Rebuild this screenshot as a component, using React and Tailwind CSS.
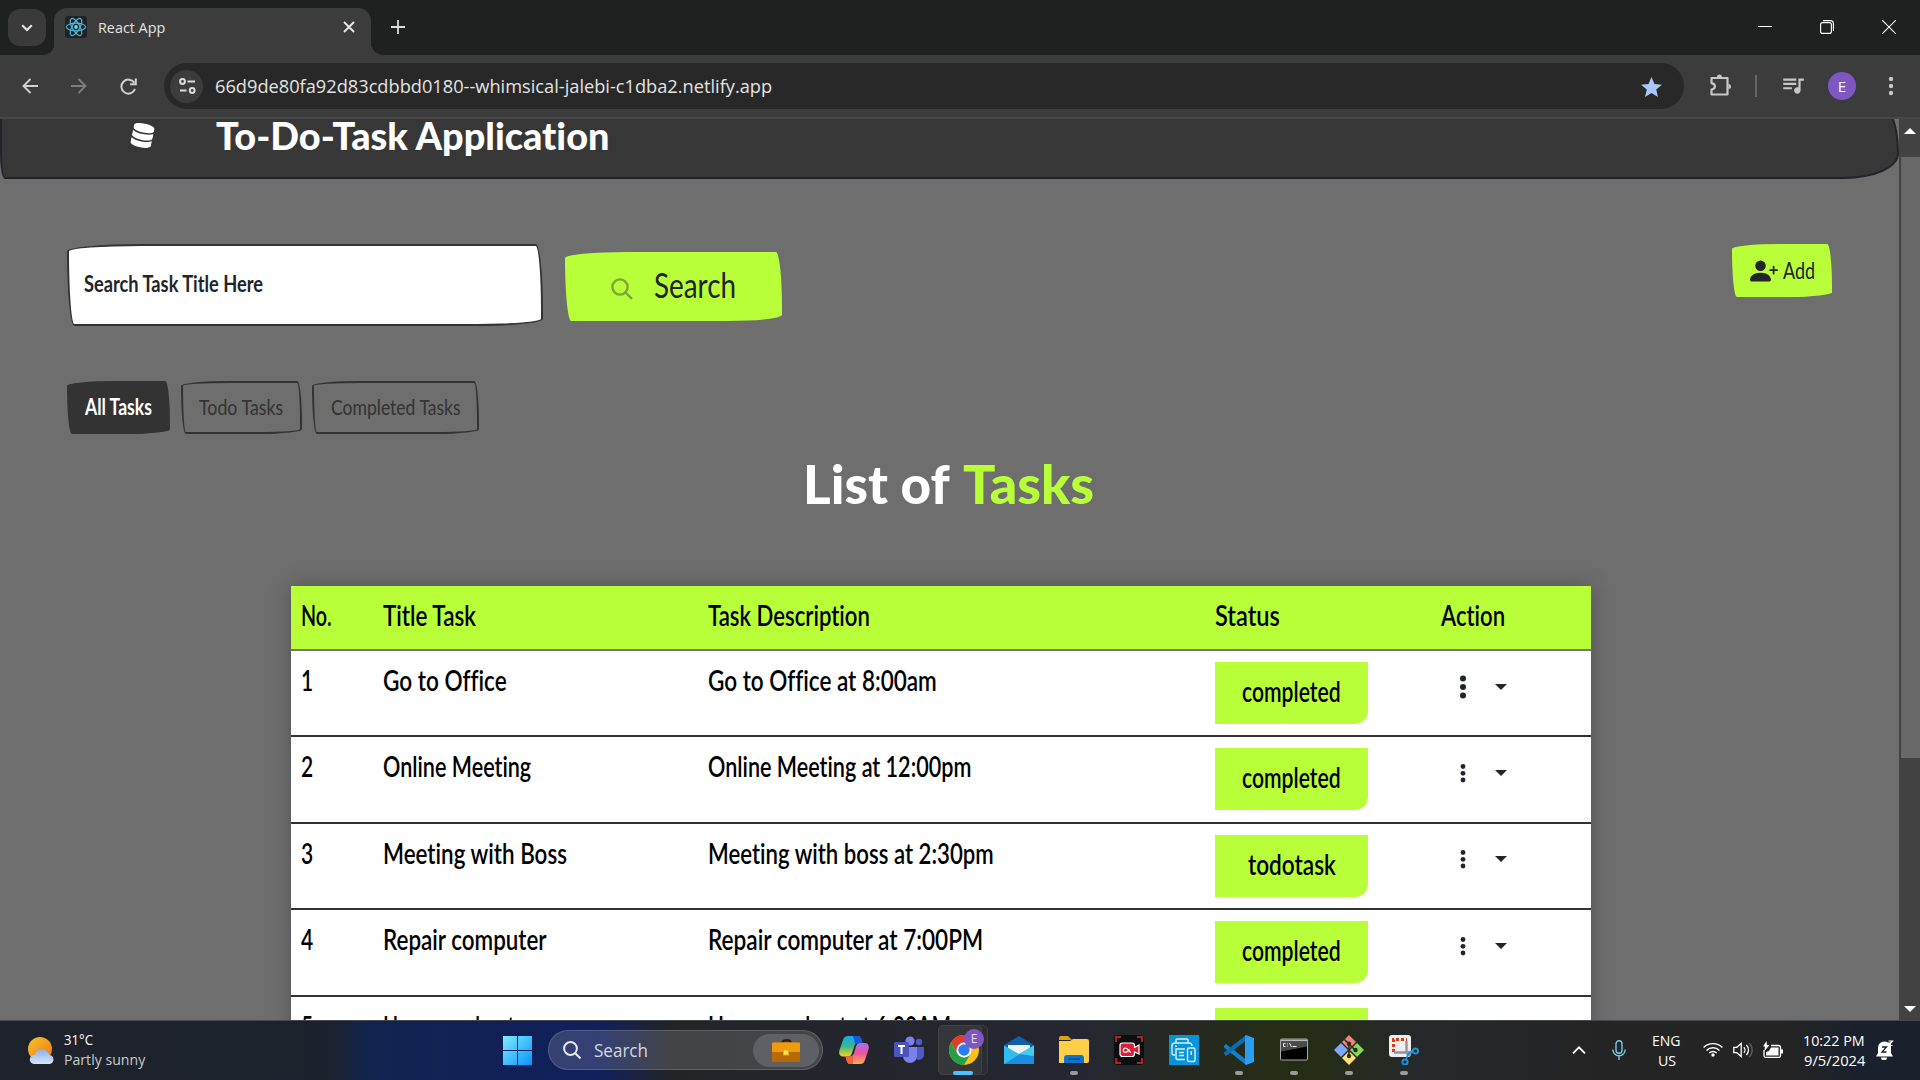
import React, { useLayoutEffect, useRef } from "react";
import { FaDatabase } from "react-icons/fa";
import { BsPersonPlusFill } from "react-icons/bs";
import { MdQueueMusic, MdStar } from "react-icons/md";

// Condenses or widens a run of text so that it fills its box.
function Fit({ className = "", children }) {
  const outer = useRef(null);
  const inner = useRef(null);
  useLayoutEffect(() => {
    const w = inner.current.offsetWidth;
    if (w) inner.current.style.transform = `scaleX(${outer.current.offsetWidth / w})`;
  }, []);
  return (
    <span ref={outer} className={`inline-block shrink-0 whitespace-nowrap ${className}`}>
      <span ref={inner} className="inline-block origin-left">{children}</span>
    </span>
  );
}

const HAND = "font-['Lato','Noto_Sans',sans-serif] [font-variant-ligatures:none]";
const SKETCH = "rounded-[255px_25px_225px_25px/25px_225px_25px_255px]";

function Favicon() {
  return (
    <svg viewBox="0 0 22 22" className="h-[22px] w-[22px]">
      <rect width="22" height="22" rx="3" fill="#1f2225" />
      <circle cx="11" cy="11" r="1.9" fill="#61dafb" />
      <g fill="none" stroke="#4fb9d8" strokeWidth="1.2">
        <ellipse cx="11" cy="11" rx="9.6" ry="3.8" />
        <ellipse cx="11" cy="11" rx="9.6" ry="3.8" transform="rotate(60 11 11)" />
        <ellipse cx="11" cy="11" rx="9.6" ry="3.8" transform="rotate(120 11 11)" />
      </g>
    </svg>
  );
}

function TabStrip() {
  return (
    <div className="flex h-[55px] items-start bg-[#1f2120]">
      <div className="ml-2 mt-[9px] flex h-[37px] w-[38px] items-center justify-center rounded-[12px] bg-[#3a3a3a]">
        <svg viewBox="0 0 12 8" className="h-2 w-3" fill="none" stroke="#e3e3e3" strokeWidth="2.2"><path d="M1.2 1.2 6 6l4.8-4.8" /></svg>
      </div>
      <svg viewBox="0 0 13 13" className="-mr-px ml-[-4px] mt-[42px] h-[13px] w-[13px]"><path d="M13 0v13H0C8 13 12 8 13 0Z" fill="#3c3c3c" /></svg>
      <div className="mt-2 flex h-[47px] w-[317px] items-center rounded-t-[13px] bg-[#3c3c3c] pb-[9px] pl-[11px]">
        <Favicon />
        <Fit className="ml-[11px] w-[67px] text-[15px] leading-5 text-[#e3e3e3]">React App</Fit>
        <svg viewBox="0 0 12 12" className="ml-[178px] h-3 w-3" fill="none" stroke="#e8e8e8" strokeWidth="1.9"><path d="m1 1 10 10M11 1 1 11" /></svg>
      </div>
      <svg viewBox="0 0 14 14" className="-ml-px mt-[41px] h-[14px] w-[14px]"><path d="M0 0v14h14C6 14 1 8 0 0Z" fill="#3c3c3c" /></svg>
      <svg viewBox="0 0 14 14" className="ml-[7px] mt-5 h-[14px] w-[14px]" fill="none" stroke="#dcdcdc" strokeWidth="1.8"><path d="M7 0v14M0 7h14" /></svg>
      <div className="mr-[24px] ml-auto flex h-[54px] items-center gap-[48px]">
        <svg viewBox="0 0 14 14" className="h-[14px] w-[14px]" stroke="#fff" strokeWidth="1"><path d="M0 6.5h14" /></svg>
        <svg viewBox="0 0 14 14" className="h-[14px] w-[14px]" fill="none" stroke="#fff" strokeWidth="1.1"><rect x=".6" y="2.6" width="10.8" height="10.8" rx="2" /><path d="M3 .6h7.4a3 3 0 0 1 3 3V11" /></svg>
        <svg viewBox="0 0 14 14" className="h-[14px] w-[14px]" stroke="#fff" strokeWidth="1.1"><path d="m0 0 14 14M14 0 0 14" /></svg>
      </div>
    </div>
  );
}

function Toolbar() {
  return (
    <div className="flex h-[62px] items-center bg-[#3c3c3c] text-[#c7c7c7]">
      <svg viewBox="0 0 16 16" className="ml-[22px] h-4 w-4" fill="none" stroke="#d0d0d0" strokeWidth="1.9"><path d="M16 8H1.5M8.5 1l-7 7 7 7" /></svg>
      <svg viewBox="0 0 16 16" className="ml-[33px] h-4 w-4" fill="none" stroke="#7d7d7d" strokeWidth="1.9"><path d="M0 8h14.500M7.500 1l7 7-7 7" /></svg>
      <svg viewBox="0 0 17 17" className="ml-[33px] h-[17px] w-[17px]" fill="none" stroke="#d0d0d0" strokeWidth="2"><path d="M15 11A7 7 0 1 1 14.300 4.800M15.800.5v5.700h-5.700" /></svg>
      <div className="ml-[27px] flex h-[46px] w-[1520px] items-center rounded-full bg-[#282828] pl-[6px] pr-[20px]">
        <div className="flex h-[33px] w-[33px] items-center justify-center rounded-full bg-[#3c3c3c]">
          <svg viewBox="0 0 17 16" className="ml-px h-4 w-[17px]" fill="none" stroke="#dcdcdc" strokeWidth="2"><circle cx="3.500" cy="3.500" r="2.400" /><path d="M8.500 3.500H16M1 12.500h6.500" /><circle cx="13.200" cy="12.500" r="2.400" /></svg>
        </div>
        <Fit className="ml-[12px] w-[557px] text-[19px] leading-6 text-[#e3e3e3]">66d9de80fa92d83cdbbd0180--whimsical-jalebi-c1dba2.netlify.app</Fit>
        <MdStar className="ml-auto mt-[2px] h-[25px] w-[25px] text-[#a8c7fa]" />
      </div>
      <svg viewBox="0 0 24 24" className="-mt-[2px] ml-[24px] h-[24px] w-[24px]" fill="none" stroke="#c7c7c7" strokeWidth="2.200"><path d="M3.500 5h16v16.500h-16v-5c4.500-.6 4.500-5.800 0-6.400Z" strokeLinejoin="round" /><path d="M9 4a2.500 2.500 0 0 1 5 0ZM20.500 11a2.500 2.500 0 0 1 0 5Z" fill="#c7c7c7" stroke="none" /></svg>
      <div className="ml-[23px] h-[22px] w-[2px] bg-[#666]" />
      <MdQueueMusic className="-mt-[2px] ml-[23px] h-[26px] w-[26px]" />
      <div className="ml-[22px] flex h-7 w-7 items-center justify-center rounded-full bg-[#7e57c2] text-[15px] text-white">E</div>
      <svg viewBox="0 0 4 20" className="ml-[33px] h-5 w-1 overflow-visible" fill="#c7c7c7"><circle cx="2" cy="3" r="2.200" /><circle cx="2" cy="10" r="2.200" /><circle cx="2" cy="17" r="2.200" /></svg>
    </div>
  );
}

const TASKS = [
  ["1", "Go to Office", "w-[124px]", "Go to Office at 8:00am", "w-[229px]", "completed", "w-[99px]"],
  ["2", "Online Meeting", "w-[148px]", "Online Meeting at 12:00pm", "w-[263px]", "completed", "w-[99px]"],
  ["3", "Meeting with Boss", "w-[184px]", "Meeting with boss at 2:30pm", "w-[286px]", "todotask", "w-[88px]"],
  ["4", "Repair computer", "w-[164px]", "Repair computer at 7:00PM", "w-[275px]", "completed", "w-[99px]"],
  ["5", "Home workout", "w-[132px]", "Home workout at 6:00AM", "w-[243px]", "completed", "w-[99px]"],
];

function TaskTable() {
  const cols = "grid grid-cols-[82px_325px_507px_226px_160px]";
  return (
    <div className="ml-[291px] w-[1300px] bg-white text-[28px] font-semibold leading-[58px] text-black shadow-[0_0_20px_rgba(0,0,0,0.25)]">
      <div className={`${cols} h-[65px] border-b-2 border-[#777] bg-[#b9ff39] pl-[10px]`}>
        <Fit className="w-[31px]">No.</Fit>
        <Fit className="w-[93px]">Title Task</Fit>
        <Fit className="w-[162px]">Task Description</Fit>
        <Fit className="w-[65px]">Status</Fit>
        <Fit className="w-[64px]">Action</Fit>
      </div>
      {TASKS.map(([no, title, tw, desc, dw, status, sw], i) => (
        <div key={no} className={`${cols} h-[86.4px] border-b-2 border-[#333] pl-[10px]`}>
          <Fit className="w-[12px]">{no}</Fit>
          <Fit className={tw}>{title}</Fit>
          <Fit className={dw}>{desc}</Fit>
          <div className="mt-[11px] flex h-[62px] w-[153px] justify-center rounded-br-[13px] bg-[#b9ff39] leading-[58px]">
            <Fit className={sw}>{status}</Fit>
          </div>
          <div className="flex h-[71px] items-center gap-6 pl-[14px]">
            <svg viewBox="0 0 16 24" className="h-6 w-4" fill="#212529">
              {(i === 0 ? [3.500, 12, 20.500] : [5.500, 12.300, 19]).map((y) => (
                <circle key={y} cx="8" cy={y} r={i === 0 ? 3 : 2.400} />
              ))}
            </svg>
            <svg viewBox="0 0 12 6" className="h-[6px] w-3" fill="#212529"><path d="M0 0h12L6 6Z" /></svg>
          </div>
        </div>
      ))}
    </div>
  );
}

function Page() {
  return (
    <div className={`h-[901px] w-[1899px] overflow-hidden bg-[#6e6e6e] ${HAND}`}>
      <header className="-mt-[22px] flex h-[82px] items-center rounded-[25px_25px_55px_5px/5px_55px_25px_25px] border-2 border-[#212529] bg-[#373737] text-white">
        <FaDatabase className="ml-[130px] mt-[-5px] h-[25px] w-[21px] rotate-[12deg]" />
        <Fit className="-mt-[6px] ml-[63px] w-[393px] text-[38px] font-black leading-[46px]">To-Do-Task Application</Fit>
      </header>
      <div className="flex items-start pl-[67px] pt-[65px]">
        <div className={`h-[82px] w-[476px] border-2 border-[#333] bg-white pl-[15px] text-[22px] font-bold leading-[76px] text-[#212529] ${SKETCH}`}>
          <Fit className="w-[179px]">Search Task Title Here</Fit>
        </div>
        <div className={`ml-[22px] mt-2 flex h-[69px] w-[217px] items-center bg-[#b9ff39] pl-[46px] text-[#212529] ${SKETCH}`}>
          <svg viewBox="0 0 22 22" className="mt-[4px] h-[22px] w-[22px]" fill="none" stroke="#7ea536" strokeWidth="2.400"><circle cx="9" cy="9" r="7.600" /><path d="m14.500 14.500 6.500 6.500" /></svg>
          <Fit className="-mt-[4px] ml-[21px] w-[82px] text-[34px] leading-[66px]">Search</Fit>
        </div>
        <div className={`ml-[950px] flex h-[53px] w-[100px] items-center bg-[#b9ff39] pl-[18px] text-[#212529] ${SKETCH}`}>
          <BsPersonPlusFill className="h-[28px] w-[28px]" />
          <Fit className="-mt-px ml-[5px] w-[32px] text-[23px] leading-[53px]">Add</Fit>
        </div>
      </div>
      <div className="mt-[55px] flex pl-[67px] text-[22px] leading-[47px] text-[#333]">
        <div className={`flex h-[53px] w-[103px] border-2 border-[#333] bg-[#333] pl-[16px] font-bold text-white ${SKETCH}`}><Fit className="w-[67px]">All Tasks</Fit></div>
        <div className={`ml-[11px] flex h-[53px] w-[121px] border-2 border-[#333] pl-[16px] ${SKETCH}`}><Fit className="w-[84px]">Todo Tasks</Fit></div>
        <div className={`ml-[10px] flex h-[53px] w-[167px] border-2 border-[#333] pl-[17px] ${SKETCH}`}><Fit className="w-[130px]">Completed Tasks</Fit></div>
      </div>
      <h1 className="mt-[20px] flex h-[132px] pl-[803px] text-[53px] font-black leading-[60px] text-white">
        <Fit className="w-[147px]">List of</Fit>
        <Fit className="ml-[13px] w-[131px] text-[#b9ff39]">Tasks</Fit>
      </h1>
      <TaskTable />
    </div>
  );
}

function Scrollbar() {
  return (
    <div className="flex h-[901px] w-[21px] flex-col items-center bg-[#424242]">
      <svg viewBox="0 0 12 6" className="mt-[9px] h-[6px] w-3" fill="#fff"><path d="M0 6h12L6 0Z" /></svg>
      <div className="ml-[2px] mt-[23px] h-[601px] w-[19px] bg-[#686868]" />
      <svg viewBox="0 0 12 6" className="mb-[8px] mt-auto h-[6px] w-3" fill="#fff"><path d="M0 0h12L6 6Z" /></svg>
    </div>
  );
}

function Copilot() {
  return (
    <svg viewBox="0 0 30 28" className="h-7 w-[30px]">
      <defs>
        <linearGradient id="cpA" x1="0" y1="0" x2="0" y2="1"><stop offset="0" stopColor="#1aa5f5" /><stop offset=".5" stopColor="#35b98a" /><stop offset="1" stopColor="#f5d21c" /></linearGradient>
        <linearGradient id="cpB" x1="0" y1="0" x2="0" y2="1"><stop offset="0" stopColor="#a66bf2" /><stop offset=".5" stopColor="#f0559b" /><stop offset="1" stopColor="#ffae4a" /></linearGradient>
      </defs>
      <path d="M9 0h10c2 0 3 2 3.500 4l1 3h-4c-2.500 0-3.500 1-4.200 3.500L13 17c-.8 2.600-2 3.500-4 3.500H4C.5 20.500-.5 17 .5 14L4 4c1-3 2.500-4 5-4Z" fill="url(#cpA)" />
      <path d="M14 0h5c2 0 3 2 3.500 4l1 3h-4c-1.500 0-2.500.5-3.200 1.400Z" fill="#1558d6" />
      <path d="M21 28H11c-2 0-3-2-3.500-4l-1-3.500H11c2.200 0 3.200-1.200 4-3.500l2-6.500C17.800 8 19 7 21 7h5c3.500 0 4.500 3.500 3.500 6.500L26 24c-1 3-2.500 4-5 4Z" fill="url(#cpB)" />
      <path d="M14 28h-3c-2 0-3-2-3.500-4l-1-3.500H11c1.500 0 2.400-.4 3.100-1.300Z" fill="#f4623a" />
    </svg>
  );
}

function Teams() {
  return (
    <svg viewBox="0 0 30 28" className="h-7 w-[30px]">
      <circle cx="25" cy="6" r="3.200" fill="#5059c9" /><circle cx="16" cy="5" r="4.600" fill="#7b83eb" />
      <path d="M20 11h10v8a5 5 0 0 1-7 4.500Z" fill="#5059c9" />
      <path d="M9 11h14v9a7 7 0 0 1-14 0Z" fill="#7b83eb" />
      <rect y="6" width="15" height="15" rx="1.500" fill="#4b53bc" />
      <path d="M4 10h7M7.500 10v8" stroke="#fff" strokeWidth="2" />
    </svg>
  );
}

function Chrome() {
  return (
    <svg viewBox="0 0 30 30" className="h-[30px] w-[30px]">
      <circle cx="15" cy="15" r="15" fill="#fbc116" />
      <path d="M2 7.500A15 15 0 0 1 28 7.500L15 8.500 8.700 18.500Z" fill="#e33b2e" />
      <path d="M2 7.500A15 15 0 0 0 15 30l6.200-10.700L15 22.500l-6.400-4Z" fill="#24a148" />
      <circle cx="15" cy="15" r="7.500" fill="#fff" /><circle cx="15" cy="15" r="5.700" fill="#2f7cf0" />
    </svg>
  );
}

function Mail() {
  return (
    <svg viewBox="0 0 30 28" className="h-7 w-[30px]">
      <path d="M0 9 15 0l15 9v3H0Z" fill="#0f5ea8" /><path d="M4 9h22v8l-11 5L4 17Z" fill="#f2f2f2" />
      <path d="M0 9.500 15 18 30 9.500V28H0Z" fill="#32bdf0" /><path d="M0 28 30 9.500V28Z" fill="#1a8fe0" /><path d="m15 18 15-8.500V20Z" fill="#42ccf2" />
    </svg>
  );
}

function Folder() {
  return (
    <svg viewBox="0 0 30 27" className="h-[27px] w-[30px]">
      <path d="M0 2C0 .8.800 0 2 0h7l4 4h-13Z" fill="#e0a010" /><path d="M0 5h11l3-2h14a2 2 0 0 1 2 2v20a2 2 0 0 1-2 2H0Z" fill="#ffcf48" />
      <path d="M5 27v-5a3 3 0 0 1 3-3h14a3 3 0 0 1 3 3v5Z" fill="#1272d0" /><path d="M9 23h12" stroke="#0b4a94" strokeWidth="1.300" />
    </svg>
  );
}

function Recorder() {
  return (
    <svg viewBox="0 0 30 30" className="h-[30px] w-[30px]" fill="none">
      <rect width="30" height="30" rx="4" fill="#0c0d0e" />
      <path d="M2 7V2h5M23 2h5v5M28 23v5h-5M7 28H2v-5" stroke="#e02b33" strokeWidth="1.500" />
      <path d="M8.500 8H18a2.500 2.500 0 0 1 2.500 2.500v2L25 10v9l-4.500-2v2A2.500 2.500 0 0 1 18 21.500H8.500A2.500 2.500 0 0 1 6 19v-8.500A2.500 2.500 0 0 1 8.500 8Z" fill="#d91e36" stroke="#fff" strokeWidth="1.200" />
      <path d="M17 17.300c-2.400 0-3-4.300-5.500-4.300a2.100 2.100 0 0 0 0 4.300c2.500 0 3-2.800 4.500-2.800" stroke="#fff" strokeWidth="1.200" />
    </svg>
  );
}

function Printer() {
  return (
    <svg viewBox="0 0 30 30" className="h-[30px] w-[30px]" fill="none" stroke="#d7f1ff" strokeWidth="1.400">
      <rect width="30" height="30" fill="#0794d8" stroke="none" />
      <path d="M7 8V5a1 1 0 0 1 1-1h10a1 1 0 0 1 1 1v3M6 20H4.500A1.500 1.500 0 0 1 3 18.500V11a3 3 0 0 1 3-3h14a3 3 0 0 1 3 3M16 24.500H8.500A1.500 1.500 0 0 1 7 23v-9h9M10 17.500h5M10 20.500h5M6 11.200h2" />
      <rect x="18.500" y="13" width="7.500" height="13.500" rx="1.500" /><path d="M22.200 16v4" />
    </svg>
  );
}

function VsCode() {
  return (
    <svg viewBox="0 0 30 30" className="h-[30px] w-[30px]">
      <path d="m0 11 2-2 20 15.500V30L0 12.500Z" fill="#1180cc" /><path d="m0 19 2 2L22 5.500V0L0 17.500Z" fill="#0a6cb4" />
      <path d="m22 0 8 3v24l-8 3-1-1V1Z" fill="#2a9df0" />
    </svg>
  );
}

function Cmd() {
  return (
    <svg viewBox="0 0 28 22" className="h-[23px] w-[28px]">
      <rect x=".5" y=".5" width="27" height="21" rx="1" fill="#000" stroke="#a8a8a8" /><path d="M1 2h26" stroke="#b9b9b9" strokeWidth="2" />
      <path d="M1 3h26v5L1 13Z" fill="#4a4a4a" />
      <path d="M5.500 5H3.500v3h2M7.500 5v.8M7.500 7.200V8M9.500 4.500l2 4M12.500 8h4" stroke="#f0f0f0" strokeWidth="1" fill="none" />
    </svg>
  );
}

function GitIcon() {
  return (
    <svg viewBox="0 0 30 30" className="h-[30px] w-[30px]">
      <path d="m15 0 7 7-7 7-7-7Z" fill="#f5817f" /><path d="m23 8 7 7-7 7-7-7Z" fill="#86d55c" />
      <path d="m15 16 7 7-7 7-7-7Z" fill="#ffdf78" /><path d="m7 8 7 7-7 7-7-7Z" fill="#7da7f8" />
      <path d="m10.500 4.500 4.500 4.500v12M15 9l6 6" fill="none" stroke="#2a2f1a" strokeWidth="1.600" /><circle cx="15" cy="8.800" r="2.200" fill="#2a2f1a" /><circle cx="15" cy="21" r="2.200" fill="#2a2f1a" /><circle cx="21.500" cy="15" r="2.200" fill="#2a2f1a" />
    </svg>
  );
}

function Snip() {
  return (
    <svg viewBox="0 0 30 30" className="h-[30px] w-[30px]" fill="none">
      <rect width="22" height="22" rx="3" fill="#eeeeee" />
      <path d="M4.500 17V4.500H18" stroke="#d83b1e" strokeWidth="3" strokeDasharray="3 2" />
      <path d="M17.500 6v12l4 2.500M5 17.500h13l6-1" stroke="#8a98a5" strokeWidth="2.400" />
      <circle cx="26.500" cy="16" r="2.600" stroke="#1d90dd" strokeWidth="2" /><circle cx="16" cy="27" r="2.600" stroke="#1d90dd" strokeWidth="2" /><path d="m17 24.500 2.500-6M24 17l-5 1.500" stroke="#1d90dd" strokeWidth="1.800" />
    </svg>
  );
}

function TaskbarApp({ children, running, tile }) {
  return (
    <div className="relative flex h-[59px] w-[55px] items-center justify-center pb-[2px]">
      {tile && <div className="absolute left-[2px] top-[4px] h-[50px] w-[50px] rounded-[5px] border border-[#3b3d42] bg-[#2b2d32]" />}
      {tile && <div className="absolute left-[2px] top-[4px] h-[50px] w-[44px] rounded-[5px] border border-[#414347] bg-[#34363a]" />}
      <div className="relative">{children}</div>
      {tile && <div className="absolute left-[28px] top-[8px] flex h-[20px] w-[20px] items-center justify-center rounded-full bg-[#7e57c2] text-[12px] text-[#e6dcf5]">E</div>}
      {tile && <div className="absolute bottom-[5px] left-[17px] h-[4px] w-[20px] rounded-full bg-[#4cc2ff]" />}
      {running && <div className="absolute bottom-[5px] left-[23.500px] h-[4px] w-2 rounded-full bg-[#9a9c9a]" />}
    </div>
  );
}

function Taskbar() {
  return (
    <div className="flex h-[60px] items-center border-t border-[#45484d] bg-[linear-gradient(90deg,#1e222b_0px,#1c222d_330px,#11234f_370px,#111f5c_600px,#222428_670px,#242731_1080px,#25291f_1200px,#242d14_1290px,#252b1c_1350px,#26282c_1420px,#242424_1600px,#242424_1780px,#1a202c_1860px,#1a202c_1920px)] text-white">
      <svg viewBox="0 0 27 27" className="-mt-[1px] ml-[28px] h-[27px] w-[27px]">
        <defs>
          <linearGradient id="sun" x1="0" y1="0" x2="1" y2="1"><stop offset="0" stopColor="#f6c232" /><stop offset="1" stopColor="#f0760f" /></linearGradient>
          <linearGradient id="cloud" x1="0" y1="0" x2="0" y2="1"><stop offset="0" stopColor="#8fb2ec" /><stop offset="1" stopColor="#d8e5fb" /></linearGradient>
        </defs>
        <circle cx="12" cy="12" r="12" fill="url(#sun)" /><path d="M6 27a4.500 4.500 0 0 1 .5-9 8 8 0 0 1 15 0 4.600 4.600 0 0 1 .5 9Z" fill="url(#cloud)" />
      </svg>
      <div className="-mt-[4px] ml-[9px] flex w-[440px] flex-col text-[15px] leading-[20px]">
        <Fit className="w-[29px]">31°C</Fit>
        <Fit className="w-[81px] text-[#c9cbce]">Partly sunny</Fit>
      </div>
      <svg viewBox="0 0 29 29" className="-ml-px h-[29px] w-[29px]">
        <defs><linearGradient id="win" x1="0" y1="0" x2="1" y2="1"><stop offset="0" stopColor="#7cecfd" /><stop offset="1" stopColor="#0c93fb" /></linearGradient></defs>
        <path d="M0 0h14v14H0ZM15 0h14v14H15ZM0 15h14v14H0ZM15 15h14v14H15Z" fill="url(#win)" />
      </svg>
      <div className="-mt-px ml-4 flex h-[40px] w-[275px] items-center rounded-full border border-white/15 bg-white/15 pl-[14px] pr-[3px]">
        <svg viewBox="0 0 18 18" className="h-[18px] w-[18px]" fill="none" stroke="#e6e8f0" strokeWidth="2"><circle cx="7.500" cy="7.500" r="6.400" /><path d="m12.200 12.200 5.300 5.300" /></svg>
        <Fit className="ml-[13px] w-[54px] text-[18px] leading-6 text-[#d5d7df]">Search</Fit>
        <div className="ml-auto flex h-[33px] w-[66px] items-center justify-center rounded-full bg-white/15">
          <svg viewBox="0 0 28 23" className="h-[23px] w-[28px]">
            <path d="M10.500 3.500c0-3 8-3 8 0" fill="none" stroke="#2b2118" strokeWidth="2.400" /><rect y="3.500" width="28" height="19.500" rx="1" fill="#b86a06" /><path d="M0 4.500a1 1 0 0 1 1-1h26a1 1 0 0 1 1 1V13H0Z" fill="#f09a0e" /><rect x="11.500" y="11" width="5" height="5" fill="#ffe45c" stroke="#e0b000" />
          </svg>
        </div>
      </div>
      <div className="ml-[3px] flex">
        <TaskbarApp><Copilot /></TaskbarApp>
        <TaskbarApp><Teams /></TaskbarApp>
        <TaskbarApp tile><Chrome /></TaskbarApp>
        <TaskbarApp><Mail /></TaskbarApp>
        <TaskbarApp running><Folder /></TaskbarApp>
        <TaskbarApp><Recorder /></TaskbarApp>
        <TaskbarApp><Printer /></TaskbarApp>
        <TaskbarApp running><VsCode /></TaskbarApp>
        <TaskbarApp running><Cmd /></TaskbarApp>
        <TaskbarApp running><GitIcon /></TaskbarApp>
        <TaskbarApp running><Snip /></TaskbarApp>
      </div>
      <div className="-mt-[2px] mr-[26px] ml-auto flex items-center">
        <svg viewBox="0 0 14 8" className="h-2 w-[14px]" fill="none" stroke="#fff" strokeWidth="1.800"><path d="m1 7.300 6-6 6 6" /></svg>
        <svg viewBox="0 0 14 20" className="ml-[26px] h-5 w-[14px]" fill="none" stroke="#76cbe5" strokeWidth="1.400"><rect x="4" y=".8" width="6" height="12.500" rx="3" /><path d="M.8 9.500a6.200 6.200 0 0 0 12.400 0M7 16v4" /></svg>
        <div className="ml-[26px] flex w-[29px] flex-col items-center text-[15px] leading-[20px]">
          <Fit className="w-[29px]">ENG</Fit><Fit className="w-[18px]">US</Fit>
        </div>
        <svg viewBox="0 0 20 15" className="ml-[22px] h-[15px] w-5" fill="none" stroke="#fff" strokeWidth="1.400"><path d="M.6 5.500a13.300 13.300 0 0 1 18.800 0M3.500 8.400a9.200 9.200 0 0 1 13 0M6.300 11a5.200 5.200 0 0 1 7.400 0" /><circle cx="10" cy="13" r="1.700" fill="#fff" stroke="none" /></svg>
        <svg viewBox="0 0 20 16" className="ml-[10px] h-4 w-5" fill="none" stroke="#fff" strokeWidth="1.300"><path d="M.8 5.300h3L8.200 1.500v13l-4.400-3.800h-3ZM10.800 5.200a4 4 0 0 1 0 5.600M13.400 3a7 7 0 0 1 0 10" /><path d="M16.300 1a10 10 0 0 1 0 14" stroke="#666" /></svg>
        <svg viewBox="0 0 20 17" className="ml-[10px] h-[17px] w-5" fill="#fff"><path d="M8 4.500h7.500a2 2 0 0 1 2 2v8a2 2 0 0 1-2 2H3a2 2 0 0 1-2-2V9" fill="none" stroke="#fff" strokeWidth="1.300" /><path d="M8 6.500h7.500v8H3V11l3-1ZM18 8.500h2v4h-2ZM3.500 0 0 5.500h2L1.500 10l5-6H4Z" /></svg>
        <div className="ml-[20px] flex w-[62px] flex-col items-end text-[15px] leading-[20px]">
          <Fit className="w-[62px]">10:22 PM</Fit><Fit className="w-[61px]">9/5/2024</Fit>
        </div>
        <svg viewBox="0 0 18 20" className="ml-[11px] h-5 w-[18px]"><path d="M0 16.500 2 13V8a6.500 6.500 0 0 1 10-5.500h3V13l2 3.500ZM5 17.500h6a3 3 0 0 1-6 0Z" fill="#fff" /><path d="M6 7h4.500L6 12h4.500" fill="none" stroke="#1a202c" strokeWidth="1.300" /><path d="M12.500 1h4l-4 4.500h4" fill="none" stroke="#fff" strokeWidth="1.200" /></svg>
      </div>
    </div>
  );
}

export default function App() {
  return (
    <div className="h-[1080px] w-[1920px] overflow-hidden bg-[#1f2120] font-['Open_Sans','Noto_Sans',sans-serif]">
      <TabStrip />
      <Toolbar />
      <div className="h-[2px] bg-[#474747]" />
      <div className="flex">
        <Page />
        <Scrollbar />
      </div>
      <Taskbar />
    </div>
  );
}
